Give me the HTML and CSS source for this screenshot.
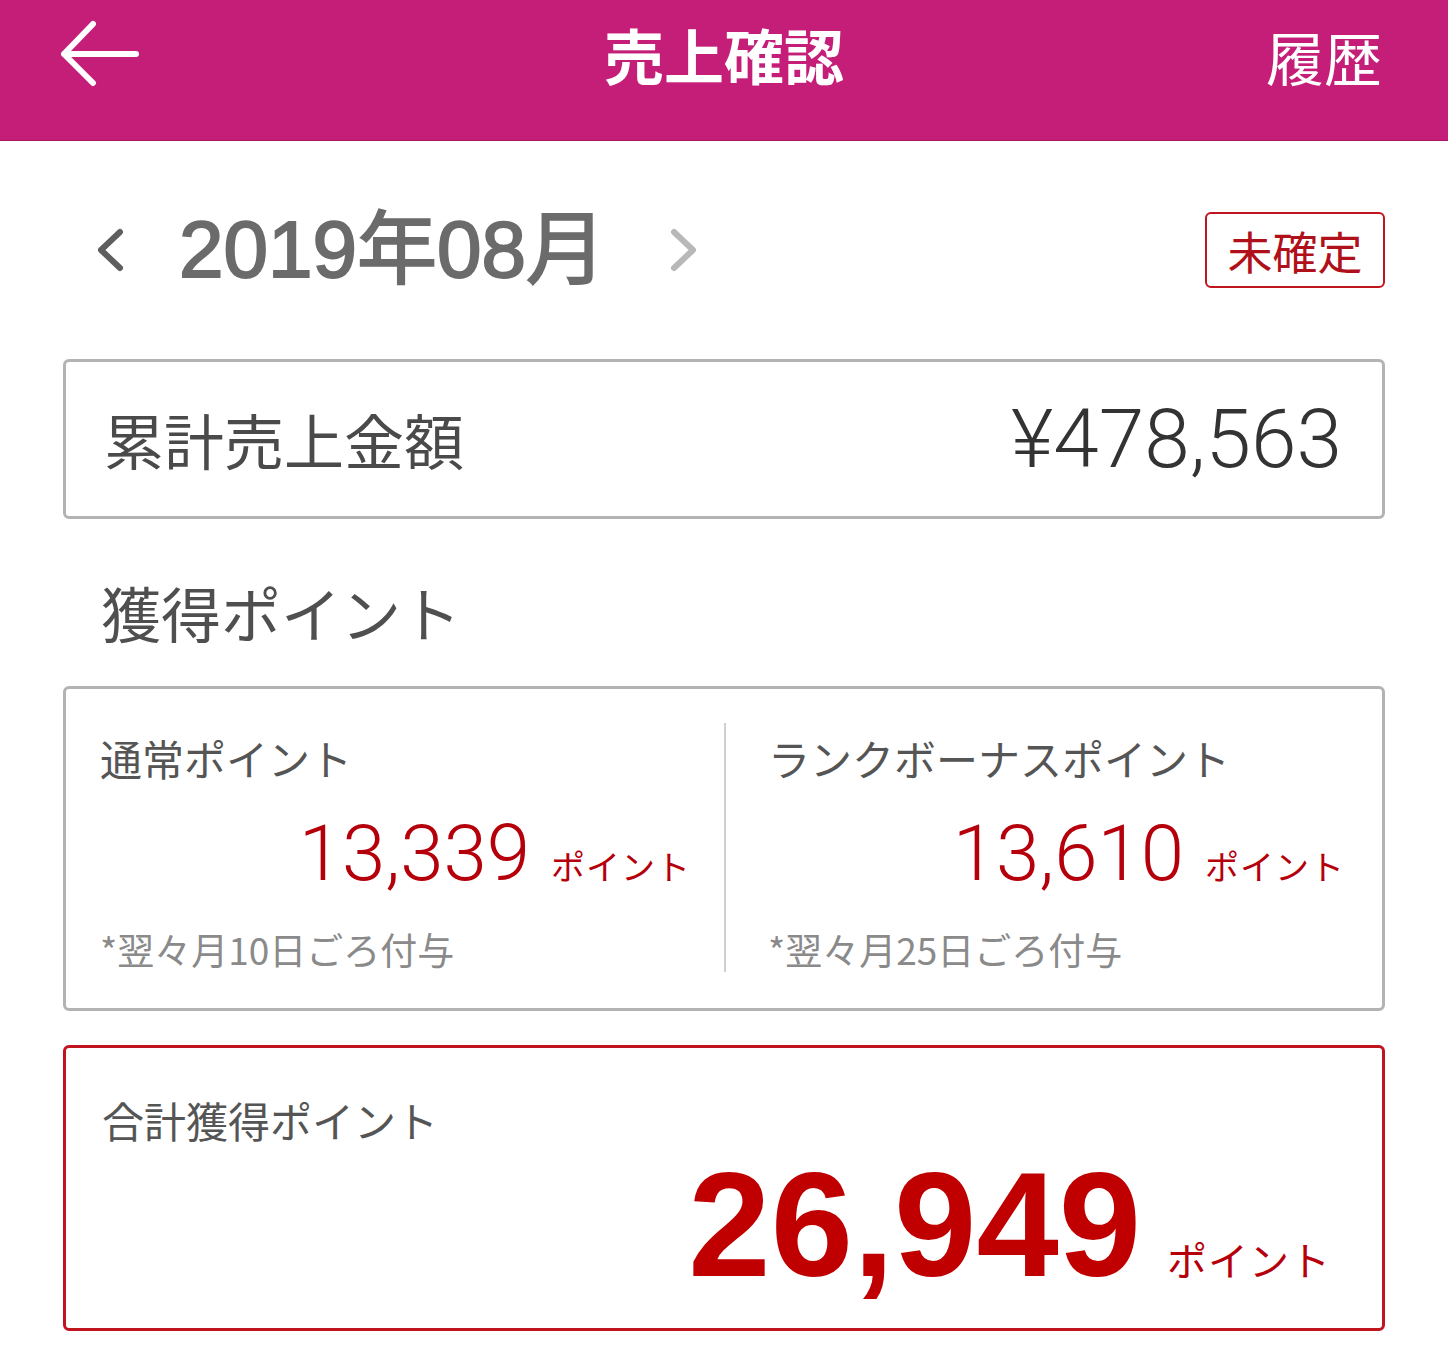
FILE: index.html
```html
<!DOCTYPE html>
<html lang="ja">
<head>
<meta charset="utf-8">
<title>売上確認</title>
<link rel="stylesheet" href="styles.css">
</head>
<body>
<header class="appbar">
  <div class="appbar-left">
    <svg class="back" viewBox="0 0 80 70" width="80" height="70" aria-hidden="true">
      <path d="M4 35 H76 M33 5 L4 35 L33 64" fill="none" stroke="#fff" stroke-width="6" stroke-linecap="round" stroke-linejoin="round"/>
    </svg>
  </div>
  <h1 class="appbar-title">売上確認</h1>
  <div class="appbar-right"><span class="history">履歴</span></div>
</header>

<main class="content">
  <div class="month-row">
    <div class="month-nav">
      <svg class="chev prev" viewBox="0 0 32 44" width="32" height="44" aria-hidden="true">
        <path d="M26 4 L7 22 L26 40" fill="none" stroke="#5e5e5e" stroke-width="6" stroke-linecap="round" stroke-linejoin="round"/>
      </svg>
      <span class="month">2019年08月</span>
      <svg class="chev next" viewBox="0 0 32 44" width="32" height="44" aria-hidden="true">
        <path d="M6 4 L25 22 L6 40" fill="none" stroke="#b8b8b8" stroke-width="6" stroke-linecap="round" stroke-linejoin="round"/>
      </svg>
    </div>
    <div class="badge">未確定</div>
  </div>

  <section class="card total-sales">
    <span class="total-label">累計売上金額</span>
    <span class="total-value">¥478,563</span>
  </section>

  <h2 class="section-title">獲得ポイント</h2>

  <section class="card points">
    <div class="col col-left">
      <div class="col-label">通常ポイント</div>
      <div class="col-value"><span class="num">13,339</span><span class="unit">ポイント</span></div>
      <div class="col-note">*翌々月10日ごろ付与</div>
    </div>
    <div class="col col-right">
      <div class="col-label">ランクボーナスポイント</div>
      <div class="col-value"><span class="num">13,610</span><span class="unit">ポイント</span></div>
      <div class="col-note">*翌々月25日ごろ付与</div>
    </div>
  </section>

  <section class="card grand">
    <div class="grand-label">合計獲得ポイント</div>
    <div class="grand-value"><span class="grand-num">26,949</span><span class="grand-unit">ポイント</span></div>
  </section>
</main>
</body>
</html>
```

FILE: styles.css
```css
* { box-sizing: border-box; }

body {
  margin: 0;
  background: #fff;
  font-family: "Noto Sans CJK JP", "Noto Sans", sans-serif;
  color: #444;
}

.appbar {
  height: 141px;
  background: #c41e78;
  border-bottom: 1px solid #a8175f;
  display: grid;
  grid-template-columns: 1fr auto 1fr;
  align-items: center;
}

.appbar-left {
  padding-left: 60px;
  display: flex;
  align-items: center;
  margin-top: -32px;
}

.appbar-title {
  margin: -32px 0 0;
  font-size: 60px;
  font-weight: 700;
  color: #fff;
  line-height: 1;
}

.appbar-right {
  display: flex;
  justify-content: flex-end;
  padding-right: 66px;
  margin-top: -28px;
}

.history {
  font-size: 58px;
  color: #fff;
  line-height: 1;
}

.content {
  padding: 0 63px;
}

.month-row {
  margin-top: 71px;
  height: 76px;
  display: flex;
  justify-content: space-between;
  align-items: center;
}

.month-nav {
  display: flex;
  align-items: center;
}

.chev.prev { margin-left: 31px; }
.chev.next { margin-left: 62px; }

.month {
  margin-left: 53px;
  font-family: "Liberation Sans", Arial, "Noto Sans CJK JP", sans-serif;
  font-weight: 400;
  font-size: 80px;
  line-height: 1;
  color: #6b6b6b;
  -webkit-text-stroke: 2px #6b6b6b;
}

.badge {
  width: 180px;
  height: 76px;
  border: 2px solid #c0141e;
  border-radius: 6px;
  color: #b0101a;
  font-size: 45px;
  line-height: 1;
  display: flex;
  align-items: center;
  justify-content: center;
}

.card {
  border: 3px solid #b3b3b3;
  border-radius: 6px;
}

.total-sales {
  margin-top: 71px;
  height: 160px;
  display: flex;
  align-items: center;
  justify-content: space-between;
  padding: 0 40px 0 38px;
}

.total-label {
  font-size: 60px;
  line-height: 1;
  color: #4a4a4a;
}

.total-value {
  font-family: Roboto, "Liberation Sans", sans-serif;
  font-weight: 300;
  font-size: 82px;
  line-height: 1;
  color: #333;
}

.section-title {
  margin: 63px 0 44px 38px;
  font-size: 60px;
  font-weight: 400;
  line-height: 60px;
  color: #4f4f4f;
}

.points {
  height: 325px;
  padding: 34px 0 36px;
  display: grid;
  grid-template-columns: 1fr 1fr;
}

.col {
  display: flex;
  flex-direction: column;
}

.col-left { padding: 0 33px 0 34px; }
.col-right {
  border-left: 2px solid #cfcfcf;
  padding: 0 37px 0 42px;
}

.col-label {
  padding-top: 10px;
  font-size: 42px;
  line-height: 50px;
  color: #555;
}

.col-value {
  margin-top: 31px;
  height: 80px;
  display: flex;
  justify-content: flex-end;
  align-items: baseline;
}

.num {
  font-family: Roboto, "Liberation Sans", sans-serif;
  font-weight: 300;
  font-size: 78px;
  line-height: 80px;
  color: #b5000c;
}

.unit {
  margin-left: 21px;
  font-size: 34px;
  color: #b5000c;
  letter-spacing: 1px;
}

.col-note {
  margin-top: 32px;
  font-size: 37px;
  line-height: 46px;
  color: #8a8a8a;
}

.grand {
  margin-top: 34px;
  height: 286px;
  border-color: #c0141e;
  padding: 47px 51px 0 36px;
}

.grand-label {
  font-size: 42px;
  line-height: 50px;
  color: #555;
}

.grand-value {
  margin-top: 6px;
  display: flex;
  justify-content: flex-end;
  align-items: baseline;
}

.grand-num {
  font-family: "Liberation Sans", Arial, sans-serif;
  font-weight: 700;
  font-size: 148px;
  line-height: 148px;
  color: #c00000;
}

.grand-unit {
  margin-left: 26px;
  font-size: 40px;
  color: #b5000c;
  letter-spacing: 1px;
}
```
